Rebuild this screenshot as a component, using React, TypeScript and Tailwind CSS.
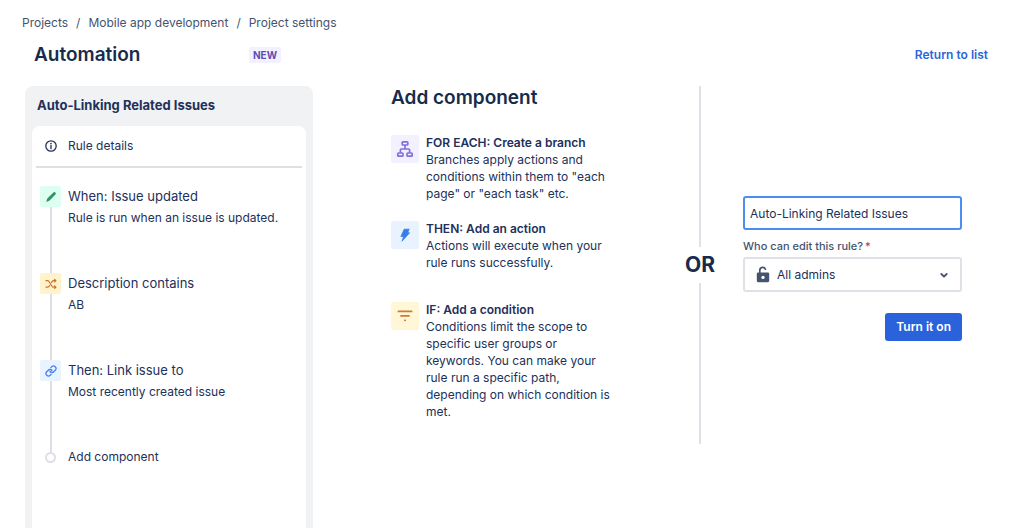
import React, { useState } from 'react';

type IconProps = { className?: string };

const InfoIcon: React.FC<IconProps> = ({ className }) => (
  <svg viewBox="0 0 12 12" className={className} fill="none" aria-hidden="true">
    <circle cx="6" cy="6" r="5.2" stroke="currentColor" strokeWidth="1.3" />
    <circle cx="6" cy="3.6" r="0.8" fill="currentColor" />
    <path d="M6 5.4v3.3" stroke="currentColor" strokeWidth="1.3" strokeLinecap="round" />
  </svg>
);

const PencilIcon: React.FC<IconProps> = ({ className }) => (
  <svg viewBox="0 0 12 12" className={className} fill="currentColor" aria-hidden="true">
    <path d="M8.4 1.6a1.4 1.4 0 0 1 2 0 1.4 1.4 0 0 1 0 2L4.6 9.6l-2.6 1.2c-.4.1-.7-.2-.6-.6l.9-2.700z" />
  </svg>
);

const ShuffleIcon: React.FC<IconProps> = ({ className }) => (
  <svg viewBox="0 0 12 12" className={className} fill="none" stroke="currentColor" strokeWidth="1.2" strokeLinecap="round" strokeLinejoin="round" aria-hidden="true">
    <path d="M1 2.7h1.5c.7 0 1.1.3 1.5.8l3 4.8c.4.6.8.9 1.5.9h2M1 9.2h1.5c.7 0 1.1-.3 1.5-.8l.6-.9M6.6 4.4l.5-.8c.4-.6.8-.9 1.4-.9h2" />
    <path d="M9.6 1.5l1.300 1.200-1.300 1.200M9.600 8l1.300 1.200-1.300 1.200" />
  </svg>
);

const LinkIcon: React.FC<IconProps> = ({ className }) => (
  <svg viewBox="0 0 24 24" className={className} fill="none" stroke="currentColor" strokeWidth="2.6" strokeLinecap="round" strokeLinejoin="round" aria-hidden="true">
    <path d="M10 13a5 5 0 0 0 7.54.54l3-3a5 5 0 0 0-7.07-7.07l-1.72 1.71" />
    <path d="M14 11a5 5 0 0 0-7.54-.54l-3 3a5 5 0 0 0 7.07 7.07l1.71-1.71" />
  </svg>
);

const BranchIcon: React.FC<IconProps> = ({ className }) => (
  <svg viewBox="0 0 18 18" className={className} fill="none" stroke="currentColor" strokeWidth="1.7" strokeLinejoin="round" aria-hidden="true">
    <rect x="6.2" y="1.8" width="5.6" height="3.2" rx="0.8" />
    <rect x="1.8" y="13" width="5.2" height="3.2" rx="0.8" />
    <rect x="11" y="13" width="5.2" height="3.2" rx="0.8" />
    <path d="M9 5v4M4.4 13v-3c0-.6.4-1 1-1h7.2c.6 0 1 .4 1 1v3" />
  </svg>
);

const BoltIcon: React.FC<IconProps> = ({ className }) => (
  <svg viewBox="0 0 18 18" className={className} fill="currentColor" stroke="currentColor" strokeWidth="0.8" strokeLinejoin="round" aria-hidden="true">
    <path d="M8.200 3.200h5l-1.600 3.600h2L6 15.200l1.700-4.600H4.900z" />
  </svg>
);

const FilterIcon: React.FC<IconProps> = ({ className }) => (
  <svg viewBox="0 0 18 18" className={className} stroke="currentColor" strokeWidth="1.700" strokeLinecap="round" aria-hidden="true">
    <path d="M2.4 4.4h13.2M5 8.900h8M8.800 13.300h.4" />
  </svg>
);

const UnlockIcon: React.FC<IconProps> = ({ className }) => (
  <svg viewBox="0 0 14 17" className={className} aria-hidden="true">
    <path d="M3.800 8V4.200a2.900 2.900 0 0 1 5.600-1" fill="none" stroke="currentColor" strokeWidth="1.700" strokeLinecap="round" />
    <path fillRule="evenodd" fill="currentColor" d="M2.200 6.600h9.600c.8 0 1.400.6 1.400 1.400v6.800c0 .8-.6 1.400-1.400 1.400H2.200c-.8 0-1.400-.6-1.400-1.400V8c0-.8.6-1.400 1.400-1.400zM7 9.700a1.700 1.700 0 1 0 0 3.400 1.700 1.700 0 0 0 0-3.400z" />
  </svg>
);

const ChevronIcon: React.FC<IconProps> = ({ className }) => (
  <svg viewBox="0 0 10 10" className={className} fill="none" stroke="currentColor" strokeWidth="1.8" strokeLinecap="round" strokeLinejoin="round" aria-hidden="true">
    <path d="M2.3 4L5 6.700 7.700 4" />
  </svg>
);

const crumbs = ['Projects', 'Mobile app development', 'Project settings'];

const steps = [
  { title: 'When: Issue updated', detail: 'Rule is run when an issue is updated.', Icon: PencilIcon, tone: 'bg-[#dcfff1] text-[#2f9463]' },
  { title: 'Description contains', detail: 'AB', Icon: ShuffleIcon, tone: 'bg-[#fff3cc] text-[#d0702c]' },
  { title: 'Then: Link issue to', detail: 'Most recently created issue', Icon: LinkIcon, tone: 'bg-[#e9f2ff] text-[#4684ec]' },
];

const components = [
  {
    title: 'FOR EACH: Create a branch',
    text: 'Branches apply actions and conditions within them to "each page" or "each task" etc.',
    Icon: BranchIcon,
    tone: 'bg-[#f3f0ff] text-[#8270db]',
  },
  {
    title: 'THEN: Add an action',
    text: 'Actions will execute when your rule runs successfully.',
    Icon: BoltIcon,
    tone: 'bg-[#e9f2ff] text-[#357de8]',
  },
  {
    title: 'IF: Add a condition',
    text: 'Conditions limit the scope to specific user groups or keywords. You can make your rule run a specific path, depending on which condition is met.',
    Icon: FilterIcon,
    tone: 'bg-[#fff7d6] text-[#cf7a35]',
  },
];

const RulePanel: React.FC<{ name: string }> = ({ name }) => (
  <aside className="w-72 shrink-0 flex flex-col rounded-t-lg bg-[#f0f2f3] px-[7px]">
    <h2 className="h-10 flex items-center px-[5px] text-[13px] font-bold">{name}</h2>
    <div className="flex-1 rounded-t-lg bg-white px-1">
      <button type="button" className="w-full h-[42px] flex items-center gap-[7px] border-b-2 border-[#dcdfe4] px-1 text-xs">
        <span className="w-[21px] flex justify-center">
          <InfoIcon className="w-3 h-3" />
        </span>
        Rule details
      </button>
      <ol className="mt-[18px] px-1">
        {steps.map(({ title, detail, Icon, tone }) => (
          <li key={title} className="min-h-[87px] flex gap-[7px]">
            <div className="flex flex-col items-center">
              <span className={`w-[21px] h-[21px] flex items-center justify-center rounded-xs ${tone}`}>
                <Icon className="w-3 h-3" />
              </span>
              <span className="w-[2px] flex-1 bg-[#dcdfe4]"></span>
            </div>
            <div>
              <h3 className="text-[13px] leading-5">{title}</h3>
              <p className="mt-[2px] text-xs leading-5">{detail}</p>
            </div>
          </li>
        ))}
        <li className="flex gap-[7px]">
          <div className="w-[21px] flex flex-col items-center">
            <span className="w-[2px] h-[5px] bg-[#dcdfe4]"></span>
            <span className="w-[11px] h-[11px] rounded-full border-2 border-[#dcdfe4]"></span>
          </div>
          <button type="button" className="text-xs leading-5">Add component</button>
        </li>
      </ol>
    </div>
  </aside>
);

const App: React.FC = () => {
  const [ruleName, setRuleName] = useState('Auto-Linking Related Issues');
  const [editors, setEditors] = useState('All admins');

  return (
    <div className="min-h-screen flex flex-col bg-white pt-[13px] font-['Inter','Liberation_Sans',sans-serif] text-[#22305a]">
      <nav aria-label="Breadcrumb" className="px-[22px]">
        <ol className="flex text-xs leading-5 text-[#44546f]">
          {crumbs.map((crumb, idx) => (
            <li key={crumb} className="flex">
              {idx > 0 && <span className="px-2">/</span>}
              <a href="#">{crumb}</a>
            </li>
          ))}
        </ol>
      </nav>

      <header className="mt-2 flex items-center pl-[34px] pr-8">
        <div className="w-[215px]">
          <h1 className="text-[19px] leading-7 font-semibold text-[#172b4d]">Automation</h1>
        </div>
        <span className="rounded-xs bg-[#f3f0ff] px-1 text-[10px] leading-4 font-bold text-[#5e4db2]">NEW</span>
        <a href="#" className="ml-auto text-xs font-semibold text-[#2a66dc]">Return to list</a>
      </header>

      <main className="mt-[17px] flex-1 flex pl-[25px]">
        <RulePanel name={ruleName} />

        <section className="flex-1 pl-[78px] pr-[52px]">
          <h2 className="mt-[-2px] text-[19px] leading-7 font-semibold text-[#172b4d]">Add component</h2>
          <ul className="mt-[22px]">
            {components.map(({ title, text, Icon, tone }) => (
              <li key={title} className="min-h-[81px] flex gap-[7px] pb-[18px]">
                <span className={`w-7 h-7 mt-px shrink-0 flex items-center justify-center rounded-xs ${tone}`}>
                  <Icon className="w-[18px] h-[18px]" />
                </span>
                <div className="text-xs leading-[17px]">
                  <h3 className="font-semibold">{title}</h3>
                  <p>{text}</p>
                </div>
              </li>
            ))}
          </ul>
        </section>

        <div className="h-[358px] w-[62px] shrink-0 flex flex-col items-center">
          <span className="w-[2px] flex-1 bg-[#dfe1e6]"></span>
          <span className="py-1 text-[21px] leading-7 font-bold text-[#172b4d]">OR</span>
          <span className="w-[2px] flex-1 bg-[#dfe1e6]"></span>
        </div>

        <form className="w-[219px] shrink-0 ml-3 mr-[58px] mt-[110px]" onSubmit={e => e.preventDefault()}>
          <input
            type="text"
            aria-label="Rule name"
            value={ruleName}
            onChange={e => setRuleName(e.target.value)}
            className="w-full h-[34px] rounded-[3px] border-2 border-[#4c8df0] px-[5px] text-xs outline-none"
          />
          <label htmlFor="editors" className="mt-2 block text-[11px] leading-4 font-medium text-[#44546f]">
            Who can edit this rule?<span className="ml-[2px] text-[#c9372c]">*</span>
          </label>
          <div className="mt-[3px] h-[35px] flex items-center gap-[7px] rounded-[3px] border-2 border-[#dfe1e6] px-[11px]">
            <UnlockIcon className="w-[14px] h-[17px] text-[#44546f]" />
            <select
              id="editors"
              value={editors}
              onChange={e => setEditors(e.target.value)}
              className="flex-1 appearance-none bg-transparent text-xs outline-none"
            >
              <option>All admins</option>
              <option>Only me</option>
            </select>
            <ChevronIcon className="w-[10px] h-[10px] text-[#44546f] pointer-events-none" />
          </div>
          <div className="mt-[21px] flex justify-end">
            <button type="submit" className="h-7 rounded-[3px] bg-[#2a62dc] px-[11px] text-xs font-semibold text-white">
              Turn it on
            </button>
          </div>
        </form>
      </main>
    </div>
  );
};

export default App;
